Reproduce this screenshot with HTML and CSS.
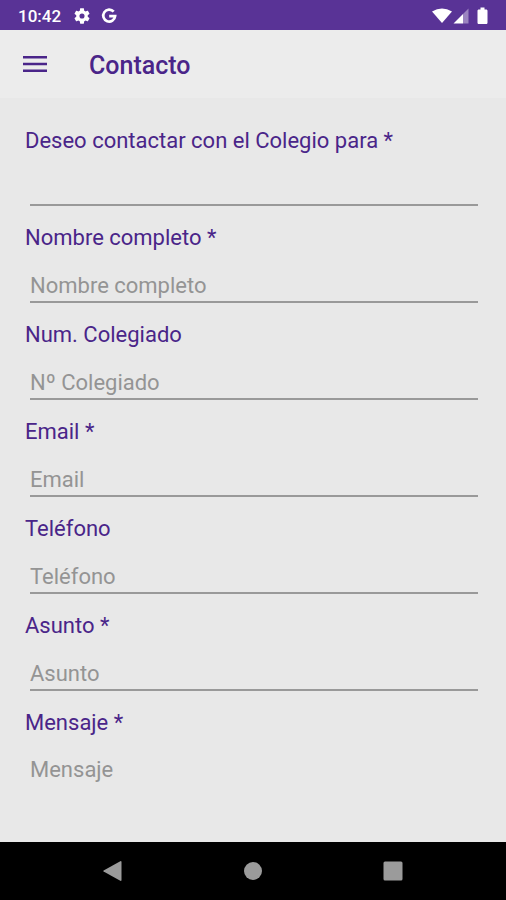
FILE: index.html
```html
<!DOCTYPE html>
<html lang="es">
<head>
<meta charset="utf-8">
<meta name="viewport" content="width=device-width, initial-scale=1">
<title>Contacto</title>
<link rel="stylesheet" href="styles.css">
</head>
<body>
<div class="screen">
  <div class="status-bar">
    <span class="clock">10:42</span>
    <svg class="status-icon" viewBox="2 2 20 20" aria-hidden="true"><path d="M19.14 12.94c.04-.3.06-.61.06-.94s-.02-.64-.07-.94l2.03-1.58c.18-.14.23-.41.12-.61l-1.92-3.32c-.12-.22-.37-.29-.59-.22l-2.39.96c-.5-.38-1.03-.7-1.62-.94L14.4 2.81c-.04-.24-.24-.41-.48-.41h-3.84c-.24 0-.43.17-.47.41L9.25 5.35c-.59.24-1.13.57-1.62.94l-2.39-.96c-.22-.08-.47 0-.59.22L2.74 8.87c-.12.21-.08.47.12.61l2.03 1.58c-.05.3-.09.63-.09.94s.02.64.07.94l-2.03 1.58c-.18.14-.23.41-.12.61l1.92 3.32c.12.22.37.29.59.22l2.39-.96c.5.38 1.03.7 1.62.94l.36 2.54c.05.24.24.41.48.41h3.84c.24 0 .44-.17.47-.41l.36-2.54c.59-.24 1.13-.56 1.62-.94l2.39.96c.22.08.47 0 .59-.22l1.92-3.32c.12-.22.07-.47-.12-.61l-2.01-1.58zM12 15.2a3.2 3.2 0 1 1 0-6.400 3.2 3.2 0 0 1 0 6.400z"/></svg>
    <svg class="status-icon" viewBox="0 0 18 18" aria-hidden="true"><path class="ring" d="M14.3 4.2A6.7 6.7 0 1 0 15.9 9.2H9.2"/></svg>
    <span class="spacer"></span>
    <svg class="system-icons" viewBox="0 0 58 18" aria-hidden="true">
      <path d="M0 4.6Q10 -1.6 20 4.6L10 16z"/>
      <path d="M21.5 16.500L31 7V16.500z"/>
      <path class="faint" d="M31 7L36.500 1.500V16.500H31z"/>
      <path d="M48.500 .5h4v2h1.700c.7 0 1.300.6 1.300 1.300v11.900c0 .7-.6 1.300-1.300 1.300h-7.400c-.7 0-1.300-.6-1.300-1.300V3.800c0-.7.6-1.300 1.300-1.300h1.700z"/>
    </svg>
  </div>

  <header class="app-bar">
    <button class="menu-button" type="button" aria-label="Abrir menú">
      <svg class="menu-icon" viewBox="0 0 24 18" aria-hidden="true"><path d="M0 1h24v2.500H0zM0 7.700h24v2.500H0zM0 14.400h24v2.500H0z"/></svg>
    </button>
    <h1 class="title">Contacto</h1>
  </header>

  <main class="content">
    <form class="form">
      <div class="field">
        <label class="label" for="motivo">Deseo contactar con el Colegio para *</label>
        <input class="control" id="motivo" type="text">
      </div>
      <div class="field">
        <label class="label" for="nombre">Nombre completo *</label>
        <input class="control" id="nombre" type="text" placeholder="Nombre completo">
      </div>
      <div class="field">
        <label class="label" for="colegiado">Num. Colegiado</label>
        <input class="control" id="colegiado" type="text" placeholder="Nº Colegiado">
      </div>
      <div class="field">
        <label class="label" for="email">Email *</label>
        <input class="control" id="email" type="email" placeholder="Email">
      </div>
      <div class="field">
        <label class="label" for="telefono">Teléfono</label>
        <input class="control" id="telefono" type="tel" placeholder="Teléfono">
      </div>
      <div class="field">
        <label class="label" for="asunto">Asunto *</label>
        <input class="control" id="asunto" type="text" placeholder="Asunto">
      </div>
      <div class="field">
        <label class="label" for="mensaje">Mensaje *</label>
        <textarea class="control control-message" id="mensaje" rows="1" placeholder="Mensaje"></textarea>
      </div>
    </form>
  </main>

  <nav class="nav-bar" aria-label="Sistema">
    <button class="nav-button" type="button" aria-label="Atrás">
      <svg class="nav-icon" viewBox="0 0 20 20" aria-hidden="true"><path d="M.6 9.500L17.300 .2Q18.500-.3 18.500 1v18q0 1.300-1.200.8L.6 10.500q-.6-.5 0-1z"/></svg>
    </button>
    <button class="nav-button" type="button" aria-label="Inicio">
      <svg class="nav-icon" viewBox="0 0 20 20" aria-hidden="true"><circle cx="10" cy="10" r="9"/></svg>
    </button>
    <button class="nav-button" type="button" aria-label="Recientes">
      <svg class="nav-icon" viewBox="0 0 20 20" aria-hidden="true"><rect x=".5" y=".5" width="19" height="19" rx="1.500"/></svg>
    </button>
  </nav>
</div>
</body>
</html>
```
FILE: styles.css
```css
* {
  box-sizing: border-box;
}

body {
  margin: 0;
  background: #e8e8e8;
  color: #4a2589;
  font-family: Roboto, "Liberation Sans", sans-serif;
}

button {
  padding: 0;
  border: 0;
  background: none;
}

svg {
  display: block;
}

.screen {
  display: flex;
  flex-direction: column;
  min-height: 100vh;
}

.status-bar {
  display: flex;
  align-items: center;
  gap: 11px;
  height: 30px;
  padding: 1px 16px 0 18px;
  background: #593396;
  color: #fff;
  fill: #fff;
}

.clock {
  margin-right: 2px;
  font-size: 17px;
  font-weight: 500;
  line-height: 28px;
}

.status-icon {
  width: 16px;
  height: 16px;
}

.ring {
  fill: none;
  stroke: #fff;
  stroke-width: 3;
}

.spacer {
  flex: 1;
}

.system-icons {
  width: 58px;
  height: 18px;
}

.faint {
  opacity: 0.4;
}

.app-bar {
  display: flex;
  align-items: center;
  gap: 42px;
  height: 68px;
  padding: 0 23px;
  background: #ececec;
}

.menu-icon {
  width: 24px;
  height: 18px;
  fill: #4a2589;
}

.title {
  margin: 0;
  padding-top: 4px;
  font-size: 25px;
  font-weight: 500;
  line-height: 32px;
}

.content {
  flex: 1;
  padding: 29px 25px 24px;
}

.form {
  display: flex;
  flex-direction: column;
  gap: 18px;
}

.field {
  display: flex;
  flex-direction: column;
}

.label {
  font-size: 22px;
  line-height: 28px;
}

.control {
  height: 51px;
  margin: 0 3px 0 5px;
  padding: 17px 0 0;
  border: 0;
  border-bottom: 2px solid #999;
  border-radius: 0;
  outline: 0;
  background: transparent;
  color: #333;
  font-family: inherit;
  font-size: 22px;
  line-height: 32px;
}

.control::placeholder {
  color: #949494;
  opacity: 1;
}

.control:focus {
  border-bottom-color: #593396;
}

.control-message {
  overflow: hidden;
  border-bottom-color: transparent;
  resize: none;
}

.nav-bar {
  display: flex;
  justify-content: center;
  gap: 120px;
  height: 58px;
  background: #000;
}

.nav-icon {
  width: 20px;
  height: 20px;
  fill: #9b9b9b;
}
```
